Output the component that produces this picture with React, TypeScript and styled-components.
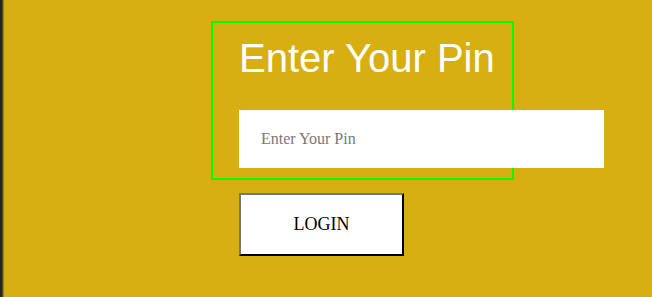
import styled, { createGlobalStyle } from 'styled-components';

const GlobalStyle = createGlobalStyle`
  html, body {
    margin: 0;
    padding: 0;
    height: 100%;
  }
  body {
    font-family: 'Liberation Serif', 'Times New Roman', serif;
  }
`;

const Page = styled.div`
  min-height: 297px;
  box-sizing: border-box;
  padding: 21px 0 0 211px;
  background: linear-gradient(
    to right,
    #1f1f1c 0,
    #2a2a22 2px,
    #7d6a12 3px,
    #c9a412 4px,
    #d8af11 5px
  );
  background-color: #d8af11;
`;

const PinBox = styled.div`
  width: 303px;
  height: 159px;
  box-sizing: border-box;
  border: 2px solid #00ff00;
  padding: 13px 26px 0;
`;

const Title = styled.h1`
  margin: 0 0 29px;
  font-family: 'Liberation Sans', Arial, sans-serif;
  font-size: 40px;
  font-weight: 400;
  line-height: normal;
  color: #ffffff;
  white-space: nowrap;
`;

const PinInput = styled.input`
  display: block;
  width: 365px;
  height: 58px;
  box-sizing: border-box;
  border: none;
  outline: none;
  padding: 0 22px;
  background: #ffffff;
  font-family: 'Liberation Serif', 'Times New Roman', serif;
  font-size: 16px;
  color: #222;
  &::placeholder {
    color: #787878;
  }
`;

const LoginButton = styled.button`
  display: block;
  margin: 13px 0 0 28px;
  width: 165px;
  height: 63px;
  box-sizing: border-box;
  background: #ffffff;
  border: 2px outset #767676;
  border-color: #767676 #1c1c1c #1c1c1c #767676;
  font-family: 'Liberation Serif', 'Times New Roman', serif;
  font-size: 18px;
  color: #000000;
  cursor: pointer;
`;

const App = () => {
  return (
    <>
      <GlobalStyle />
      <Page>
        <PinBox>
          <Title>Enter Your Pin</Title>
          <PinInput type="password" placeholder="Enter Your Pin" />
        </PinBox>
        <LoginButton>LOGIN</LoginButton>
      </Page>
    </>
  );
};

export default App;
